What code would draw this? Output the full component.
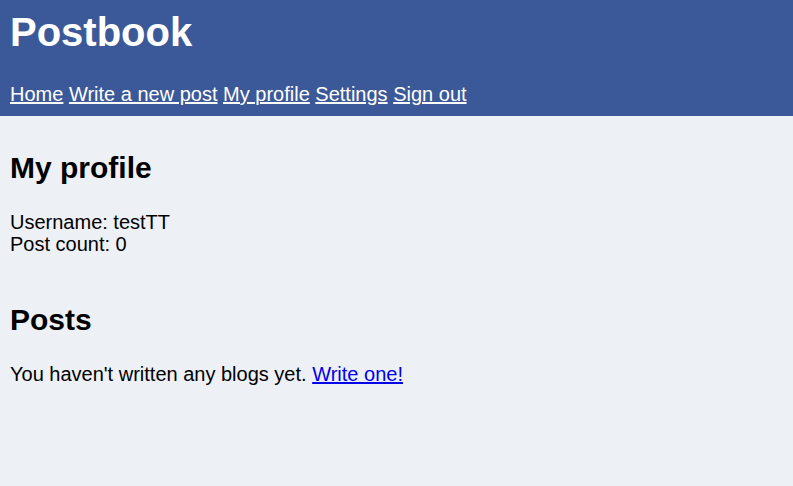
import React from 'react';

const navLinks = ['Home', 'Write a new post', 'My profile', 'Settings', 'Sign out'];

export default function App() {
  return (
    <div className="min-h-[486px] bg-[#edf0f5] text-black font-['Liberation_Sans',Arial,sans-serif]">
      {/* Header */}
      <header className="bg-[#3b5998] px-[10px] pt-[9px] pb-[11px] text-white">
        <h1 className="text-[40px] leading-[46px] font-bold">Postbook</h1>
        <nav className="mt-[28px] text-[20px] leading-[22px]">
          {navLinks.map((link, i) => (
            <React.Fragment key={link}>
              <a href="#" className="underline text-white">
                {link}
              </a>
              {i < navLinks.length - 1 && ' '}
            </React.Fragment>
          ))}
        </nav>
      </header>

      {/* Profile */}
      <main className="px-[10px] text-[20px] leading-[22px]">
        <h2 className="mt-[35px] text-[30px] leading-[34px] font-bold">My profile</h2>
        <div className="mt-[26px]">
          <div>Username: testTT</div>
          <div>Post count: 0</div>
        </div>

        <h2 className="mt-[48px] text-[30px] leading-[34px] font-bold">Posts</h2>
        <p className="mt-[26px]">
          You haven't written any blogs yet.{' '}
          <a href="#" className="underline text-[#0000ee]">
            Write one!
          </a>
        </p>
      </main>
    </div>
  );
}
